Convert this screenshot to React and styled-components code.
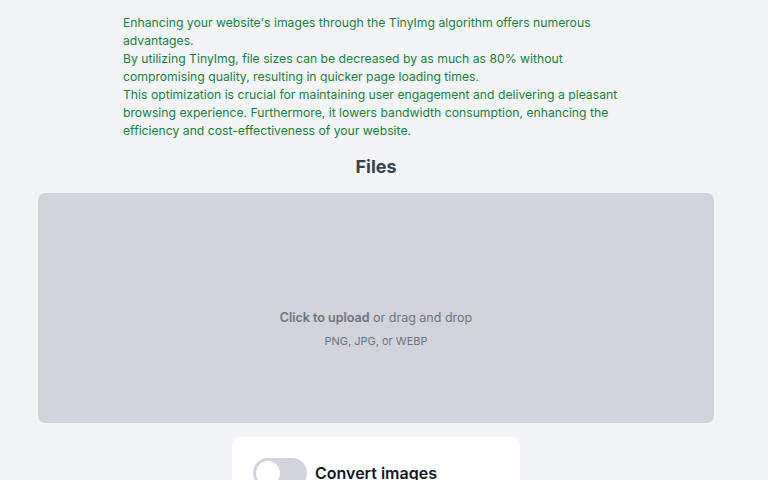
import React from "react";
import styled, { createGlobalStyle } from "styled-components";

const Global = createGlobalStyle`
  html, body { margin: 0; padding: 0; background: #f3f4f6; }
  body { font-family: Inter, "Noto Sans", sans-serif; -webkit-font-smoothing: antialiased; }
`;

const Page = styled.div`
  min-height: 480px;
  padding: 14px 16px 0 0;
  box-sizing: border-box;
`;

const Main = styled.main`
  width: 676px;
  margin: 0 auto;
  display: flex;
  flex-direction: column;
  align-items: center;
`;

const Intro = styled.div`
  width: 506px;
  color: #15803d;
  font-size: 12.2px;
  line-height: 18px;
`;

const Line = styled.p`
  margin: 0;
`;

const Heading = styled.h2`
  margin: 15px 0 14px;
  font-size: 18px;
  line-height: 24px;
  font-weight: 700;
  color: #374151;
`;

const Drop = styled.label`
  width: 100%;
  height: 230px;
  box-sizing: border-box;
  background: #d1d5db;
  border-radius: 7px;
  display: flex;
  flex-direction: column;
  align-items: center;
  justify-content: center;
  gap: 6px;
  padding-top: 42px;
  cursor: pointer;
`;

const DropTitle = styled.p`
  margin: 0;
  font-size: 12.5px;
  line-height: 18px;
  color: #6b7280;
  strong { font-weight: 600; color: #6b7280; }
`;

const DropHint = styled.p`
  margin: 0;
  font-size: 11px;
  line-height: 16px;
  color: #6b7280;
`;

const Card = styled.div`
  margin-top: 14px;
  width: 288px;
  height: 60px;
  background: #ffffff;
  border-radius: 8px;
  display: flex;
  align-items: flex-start;
  gap: 8px;
  padding: 21px 0 0 21px;
  box-sizing: border-box;
`;

const Toggle = styled.span`
  position: relative;
  width: 54px;
  height: 30px;
  border-radius: 15px;
  background: #d1d5db;
  flex-shrink: 0;
  &::after {
    content: "";
    position: absolute;
    left: 3px;
    top: 3px;
    width: 24px;
    height: 24px;
    border-radius: 50%;
    background: #ffffff;
  }
`;

const CardLabel = styled.span`
  font-size: 16px;
  font-weight: 600;
  color: #111827;
  line-height: 20px;
  margin-top: 5px;
`;

export default function App() {
  return (
    <>
      <Global />
      <Page>
        <Main>
          <Intro>
            <Line>Enhancing your website's images through the TinyImg algorithm offers numerous advantages.</Line>
            <Line>By utilizing TinyImg, file sizes can be decreased by as much as 80% without compromising quality, resulting in quicker page loading times.</Line>
            <Line>This optimization is crucial for maintaining user engagement and delivering a pleasant browsing experience. Furthermore, it lowers bandwidth consumption, enhancing the efficiency and cost-effectiveness of your website.</Line>
          </Intro>
          <Heading>Files</Heading>
          <Drop>
            <DropTitle><strong>Click to upload</strong> or drag and drop</DropTitle>
            <DropHint>PNG, JPG, or WEBP</DropHint>
          </Drop>
          <Card>
            <Toggle />
            <CardLabel>Convert images</CardLabel>
          </Card>
        </Main>
      </Page>
    </>
  );
}
